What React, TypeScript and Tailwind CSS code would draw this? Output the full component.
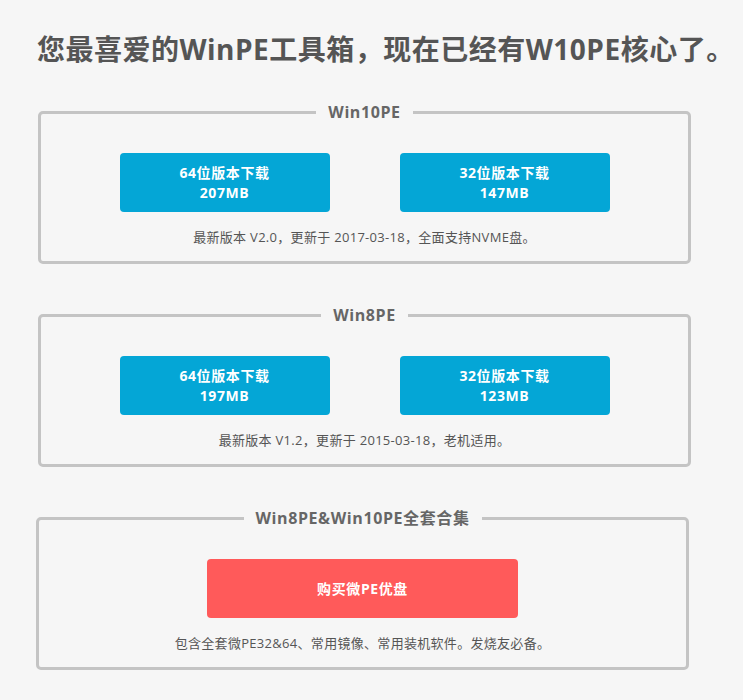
import React from 'react'

const font = { fontFamily: '"Open Sans", "Noto Sans CJK SC", sans-serif' }

type Pkg = {
  title: string
  note: string
  buttons: { label: string; size: string }[]
}

const packs: Pkg[] = [
  {
    title: 'Win10PE',
    note: '最新版本 V2.0，更新于 2017-03-18，全面支持NVME盘。',
    buttons: [
      { label: '64位版本下载', size: '207MB' },
      { label: '32位版本下载', size: '147MB' },
    ],
  },
  {
    title: 'Win8PE',
    note: '最新版本 V1.2，更新于 2015-03-18，老机适用。',
    buttons: [
      { label: '64位版本下载', size: '197MB' },
      { label: '32位版本下载', size: '123MB' },
    ],
  },
]

const App: React.FC = () => {
  return (
    <div className="min-h-[700px] bg-[#f6f6f6] pb-8 text-[#555]" style={font}>
      {/* 标题 */}
      <h1 className="pt-[31px] pl-[37px] text-[28px] font-bold leading-[36px] tracking-[0.5px] text-[#555]">
        您最喜爱的WinPE工具箱，现在已经有W10PE核心了。
      </h1>

      {/* 下载区 */}
      {packs.map((p, i) => (
        <fieldset
          key={p.title}
          className={`ml-[38px] w-[653px] rounded-[5px] border-[3px] border-[#c4c4c4] px-0 pb-[14px] ${i === 0 ? 'mt-[33px]' : 'mt-[39px]'}`}
        >
          <legend className="mx-auto px-3 text-base font-bold leading-6 tracking-[0.6px] text-[#666]">{p.title}</legend>
          <div className="flex justify-center gap-[70px] pt-[29px]">
            {p.buttons.map(b => (
              <button
                key={b.label}
                className="flex h-[59px] w-[210px] flex-col items-center justify-center rounded-[4px] bg-[#04a6d6] text-[14px] font-bold leading-[20px] tracking-[0.6px] text-white"
              >
                <span>{b.label}</span>
                <span>{b.size}</span>
              </button>
            ))}
          </div>
          <p className="mt-[15px] text-center text-[13px] leading-[20px] tracking-[0.3px] text-[#555]">{p.note}</p>
        </fieldset>
      ))}

      {/* 全套合集 */}
      <fieldset className="mt-[39px] ml-[36px] w-[653px] rounded-[5px] border-[3px] border-[#c4c4c4] pb-[14px]">
        <legend className="mx-auto px-3 text-base font-bold leading-6 tracking-[0.6px] text-[#666]">Win8PE&amp;Win10PE全套合集</legend>
        <div className="flex justify-center pt-[29px]">
          <button className="h-[59px] w-[311px] rounded-[4px] bg-[#ff5a5a] text-[14px] font-bold tracking-[0.6px] text-white">
            购买微PE优盘
          </button>
        </div>
        <p className="mt-[15px] text-center text-[13px] leading-[20px] tracking-[0.3px] text-[#555]">
          包含全套微PE32&amp;64、常用镜像、常用装机软件。发烧友必备。
        </p>
      </fieldset>
    </div>
  )
}

export default App
